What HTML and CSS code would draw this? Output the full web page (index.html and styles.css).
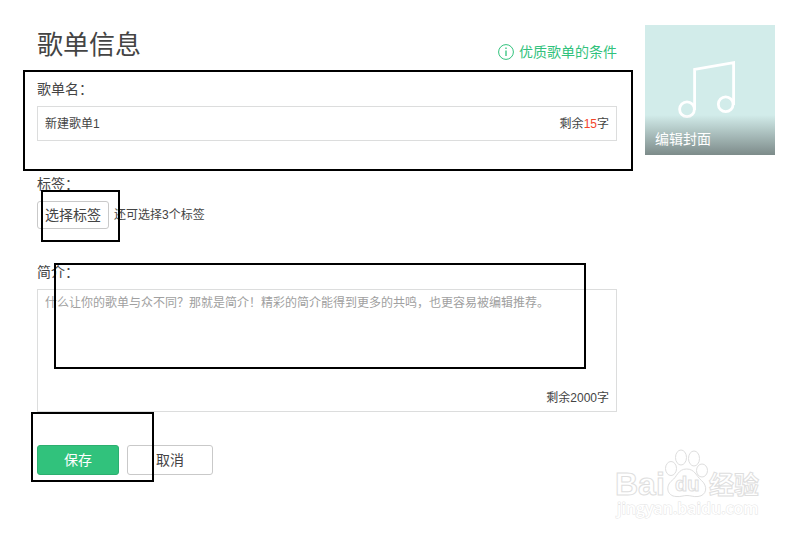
FILE: index.html
```html
<!DOCTYPE html>
<html lang="zh-CN">
<head>
<meta charset="utf-8">
<title>歌单信息</title>
<link rel="stylesheet" href="styles.css">
</head>
<body>
<div class="page">
  <form class="form">
    <header class="header">
      <h1 class="title">歌单信息</h1>
      <a class="tips" href="#">
        <svg class="tips-icon" viewBox="0 0 16 16" aria-hidden="true">
          <circle cx="8" cy="8" r="7.4" fill="none" stroke="currentColor"/>
          <path d="M8 6.5V12M8 3.5V5" stroke="currentColor" stroke-width="1.3" fill="none"/>
        </svg>
        优质歌单的条件
      </a>
    </header>

    <div class="field">
      <label class="label" for="name">歌单名：</label>
      <div class="box">
        <input class="input" id="name" type="text" value="新建歌单1">
        <span class="count">剩余<em class="count-num">15</em>字</span>
      </div>
      <span class="mark mark-name"></span>
    </div>

    <div class="field">
      <label class="label" for="tags">标签：</label>
      <div class="tag-row">
        <button class="btn btn-tag" id="tags" type="button">选择标签</button>
        <span>还可选择3个标签</span>
      </div>
      <span class="mark mark-tag"></span>
    </div>

    <div class="field">
      <label class="label" for="intro">简介：</label>
      <div class="box box-intro">
        <textarea class="textarea" id="intro" placeholder="什么让你的歌单与众不同？那就是简介！精彩的简介能得到更多的共鸣，也更容易被编辑推荐。"></textarea>
        <span class="count">剩余2000字</span>
      </div>
      <span class="mark mark-intro"></span>
    </div>

    <div class="field actions">
      <button class="btn btn-save" type="button">保存</button>
      <button class="btn btn-cancel" type="button">取消</button>
      <span class="mark mark-save"></span>
    </div>
  </form>

  <a class="cover" href="#">
    <svg class="cover-note" viewBox="0 0 130 130" aria-hidden="true">
      <g fill="none" stroke="#fff" stroke-width="2.8">
        <circle cx="42" cy="84.3" r="7.4"/>
        <circle cx="80.7" cy="79.3" r="7.4"/>
        <path d="M49.6 85V44.4L88.6 37.6V80"/>
      </g>
    </svg>
    <span class="cover-text">编辑封面</span>
  </a>
</div>

<svg class="watermark" viewBox="0 0 156 80" role="img" aria-label="Baidu 经验">
  <g class="wm-shape">
    <ellipse cx="59" cy="23.500" rx="5.5" ry="7"/>
    <ellipse cx="69" cy="12.500" rx="5.5" ry="7.5"/>
    <ellipse cx="82" cy="13.500" rx="5.5" ry="7.5"/>
    <ellipse cx="90" cy="25.500" rx="5.5" ry="6.5"/>
    <path d="M74.500 24C66 24 65 32 60 35.500C53 41 55 51 64 51.500C69 52 71 50.500 75 50.500C79 50.500 81 52 86 51.500C95 50.500 96 41 89.500 35.500C84 31 83 24 74.500 24Z"/>
  </g>
  <text class="wm-text wm-bai" x="3" y="50">Bai</text>
  <text class="wm-text wm-du" x="63" y="46">du</text>
  <text class="wm-text wm-cn" x="97" y="49">经验</text>
  <text class="wm-text wm-url" x="5" y="69">jingyan.baidu.com</text>
</svg>
</body>
</html>
```

FILE: styles.css
```css
* {
  box-sizing: border-box;
}

body {
  margin: 0;
  min-height: 100vh;
  position: relative;
  background: #fff;
  color: #444;
  font: 12px/20px "Liberation Sans", "Noto Sans CJK SC", sans-serif;
}

button,
input,
textarea {
  font: inherit;
  color: inherit;
}

.page {
  display: grid;
  grid-template-columns: minmax(0, 1fr) 130px;
  gap: 28px;
  align-items: start;
  padding: 25px 28px 25px 37px;
}

.form {
  display: flex;
  flex-direction: column;
  gap: 33px;
}

.header {
  display: flex;
  justify-content: space-between;
  align-items: center;
  height: 40px;
  margin-bottom: -19px;
}

.title {
  margin: 0;
  font-size: 26px;
  font-weight: 400;
  line-height: 40px;
}

.tips {
  display: flex;
  align-items: center;
  gap: 5px;
  padding-top: 14px;
  color: #31c27c;
  font-size: 14px;
  text-decoration: none;
}

.tips-icon {
  width: 16px;
  height: 16px;
}

.field {
  position: relative;
}

.label {
  display: block;
  margin-bottom: 7px;
  font-size: 14px;
}

.box {
  display: flex;
  align-items: center;
  height: 35px;
  padding: 0 7px;
  border: 1px solid #dcdddd;
}

.input {
  flex: 1;
  min-width: 0;
  padding: 0;
  border: 0;
  outline: 0;
  background: none;
}

.count-num {
  color: #f4452a;
  font-style: normal;
}

.box-intro {
  flex-direction: column;
  align-items: flex-end;
  height: 123px;
  padding: 3px 7px;
}

.textarea {
  flex: 1;
  width: 100%;
  padding: 0;
  border: 0;
  outline: 0;
  resize: none;
  background: none;
}

.textarea::placeholder {
  color: #a0a0a0;
}

.tag-row {
  display: flex;
  align-items: center;
  gap: 5px;
}

.btn {
  padding: 0;
  border: 1px solid #c9c9c9;
  border-radius: 3px;
  background: #fff;
  font-size: 14px;
}

.btn-tag {
  width: 72px;
  height: 28px;
}

.actions {
  display: flex;
  gap: 8px;
}

.btn-save {
  width: 82px;
  height: 30px;
  border-color: #2caf6f;
  background: #31c27c;
  color: #fff;
}

.btn-cancel {
  width: 86px;
  height: 30px;
}

.mark {
  position: absolute;
  border: 2px solid #000;
  pointer-events: none;
}

.mark-name {
  inset: -9px -16px -30px -14px;
}

.mark-tag {
  top: 16px;
  left: 4px;
  width: 79px;
  height: 52px;
}

.mark-intro {
  inset: 1px 31px 43px 17px;
}

.mark-save {
  top: -33px;
  left: -6px;
  width: 123px;
  height: 70px;
}

.cover {
  display: grid;
  background: #d2ecea;
  color: #fff;
  font-size: 14px;
  text-decoration: none;
}

.cover-note,
.cover-text {
  grid-area: 1 / 1;
}

.cover-note {
  display: block;
  width: 100%;
}

.cover-text {
  align-self: end;
  padding: 14px 10px 6px;
  background: linear-gradient(rgba(110, 122, 121, 0), rgba(110, 122, 121, 0.85));
}

.watermark {
  position: absolute;
  right: 35px;
  bottom: 12px;
  width: 156px;
  height: 80px;
}

.wm-shape,
.wm-text {
  fill: #fff;
  stroke: #dedede;
  stroke-width: 1px;
}

.wm-text {
  font-weight: 700;
}

.wm-bai {
  font-size: 32px;
}

.wm-du {
  font-size: 20px;
}

.wm-cn {
  font-size: 25px;
}

.wm-url {
  font-family: "Open Sans", sans-serif;
  font-size: 16px;
  font-weight: 600;
  stroke: #e4e4e4;
  paint-order: stroke;
}
```
